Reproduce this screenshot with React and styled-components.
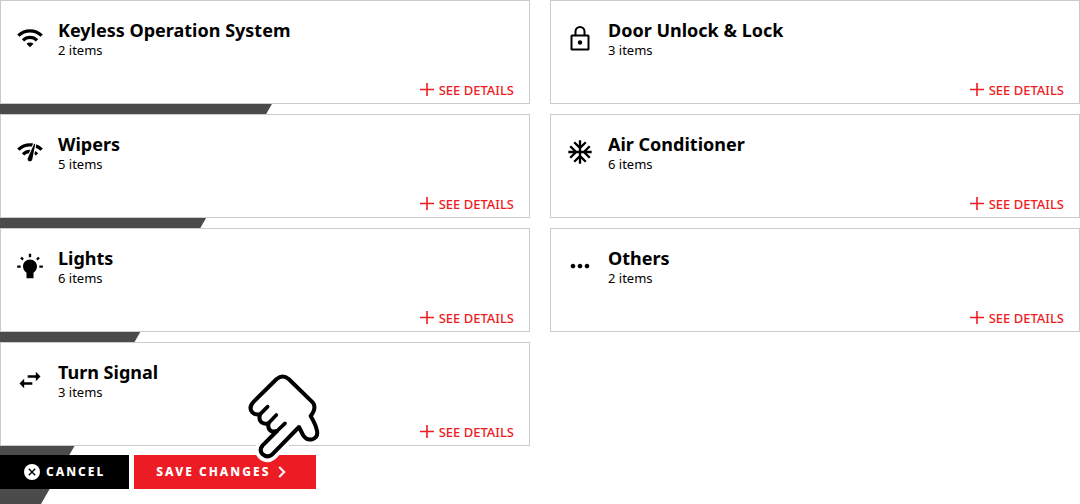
import React from "react"
import styled, { createGlobalStyle, css } from "styled-components"
import {
  MdAcUnit,
  MdMoreHoriz,
  MdNetworkCheck,
  MdSwapHoriz,
  MdWbIncandescent,
  MdWifi,
} from "react-icons/md"

const colors = {
  red: "#ed1c24",
  stripe: "#4b4b4b",
  line: "#cbcbcb",
}

const GlobalStyle = createGlobalStyle`
  * {
    box-sizing: border-box;
  }
  body {
    margin: 0;
    background: #fff;
    color: #000;
    font-family: "Noto Sans", "Open Sans", sans-serif;
  }
`

const Page = styled.main`
  min-height: 100vh;
  background: linear-gradient(120deg, ${colors.stripe} 287px, #fff 288px);
`

const Grid = styled.div`
  display: grid;
  grid-template-columns: 1fr 1fr;
  gap: 10px 20px;
`

const Card = styled.section`
  display: grid;
  grid-template-columns: 28px 1fr;
  column-gap: 14px;
  align-items: start;
  padding: 18px 15px 3px;
  border: 1px solid ${colors.line};
  background: #fff;
`

const IconBox = styled.span`
  display: flex;
  padding-top: 5px;
  font-size: 28px;
  ${({ $flip }) =>
    $flip &&
    css`
      & svg {
        transform: rotate(180deg);
      }
    `}
`

const Title = styled.h2`
  margin: 0;
  font-size: 18px;
  line-height: 22px;
  font-weight: 700;
`

const Count = styled.p`
  margin: 0;
  font-size: 13px;
  line-height: 18px;
`

const Details = styled.button`
  grid-column: 1 / -1;
  justify-self: end;
  display: flex;
  align-items: center;
  gap: 5px;
  margin-top: 21px;
  padding: 0;
  border: 0;
  background: none;
  color: ${colors.red};
  font: 500 13px/20px "Noto Sans", sans-serif;
  cursor: pointer;
`

const Actions = styled.div`
  display: flex;
  gap: 5px;
  margin-top: 9px;
`

const Button = styled.button`
  display: flex;
  align-items: center;
  justify-content: center;
  gap: ${({ $primary }) => ($primary ? "8px" : "6px")};
  height: 34px;
  padding: ${({ $primary }) => ($primary ? "0 30px 0 22px" : "0 24px")};
  border: 0;
  background: ${({ $primary }) => ($primary ? colors.red : "#000")};
  color: #fff;
  font: 800 12px/16px "Noto Sans", sans-serif;
  letter-spacing: 2px;
  cursor: pointer;
`

const SaveArea = styled.div`
  position: relative;
`

const Pointer = styled.svg`
  position: absolute;
  left: 106px;
  top: -87px;
  pointer-events: none;
`

const LockIcon = () => (
  <svg width="28" height="28" viewBox="0 0 28 28" aria-hidden="true">
    <g fill="none" stroke="currentColor" strokeWidth="2">
      <rect x="5.5" y="11.5" width="17" height="14" rx="0.6" />
      <path d="M9.5 11.5V7.5a4.5 4.5 0 0 1 9 0v4" />
    </g>
    <circle cx="14" cy="18.5" r="2.2" fill="currentColor" />
  </svg>
)

const PlusIcon = () => (
  <svg width="14" height="14" viewBox="0 0 14 14" aria-hidden="true">
    <path d="M7 0v13M0 6.5h14" stroke="currentColor" strokeWidth="1.6" />
  </svg>
)

const CloseIcon = () => (
  <svg width="16" height="16" viewBox="0 0 16 16" aria-hidden="true">
    <circle cx="8" cy="8" r="8" fill="#fff" />
    <path d="M4.8 4.8l6.4 6.4M11.2 4.8l-6.4 6.4" stroke="#000" strokeWidth="1.4" />
  </svg>
)

const ChevronIcon = () => (
  <svg width="8" height="12" viewBox="0 0 8 12" aria-hidden="true">
    <path d="M1.2 1l5 5-5 5" fill="none" stroke="#fff" strokeWidth="2" />
  </svg>
)

const handOutline =
  "M830 117L762 184Q744 202 757 217Q766 226 780 223Q775 241 786 248Q795 254 806 249Q802 266 812 272Q820 277 831 273L788 316Q776 330 788 343Q801 355 816 344L897 261L909 285Q919 302 937 298Q955 292 951 273Q948 255 932 228Q951 203 938 187L866 117Q848 102 830 117Z"

const HandPointer = () => (
  <Pointer width="85" height="100" viewBox="720 84 255 300" aria-hidden="true">
    <g strokeLinejoin="round" strokeLinecap="round">
      <path d={handOutline} fill="#fff" stroke="#fff" strokeWidth="34" />
      <path d={handOutline} fill="#fff" stroke="#000" strokeWidth="12" />
      <path
        d="M780 223L803 200M806 249L829 225M831 273L855 250"
        fill="none"
        stroke="#000"
        strokeWidth="11"
      />
    </g>
  </Pointer>
)

const groups = [
  { title: "Keyless Operation System", count: 2, icon: MdWifi },
  { title: "Door Unlock & Lock", count: 3, icon: LockIcon },
  { title: "Wipers", count: 5, icon: MdNetworkCheck },
  { title: "Air Conditioner", count: 6, icon: MdAcUnit },
  { title: "Lights", count: 6, icon: MdWbIncandescent, flip: true },
  { title: "Others", count: 2, icon: MdMoreHoriz },
  { title: "Turn Signal", count: 3, icon: MdSwapHoriz },
]

const SettingGroup = ({ title, count, icon: Icon, flip }) => (
  <Card>
    <IconBox $flip={flip}>
      <Icon aria-hidden="true" />
    </IconBox>
    <div>
      <Title>{title}</Title>
      <Count>{count} items</Count>
    </div>
    <Details type="button">
      <PlusIcon />
      SEE DETAILS
    </Details>
  </Card>
)

export default function App() {
  return (
    <Page>
      <GlobalStyle />
      <Grid>
        {groups.map(group => (
          <SettingGroup key={group.title} {...group} />
        ))}
      </Grid>
      <Actions>
        <Button type="button">
          <CloseIcon />
          CANCEL
        </Button>
        <SaveArea>
          <Button type="button" $primary>
            SAVE CHANGES
            <ChevronIcon />
          </Button>
          <HandPointer />
        </SaveArea>
      </Actions>
    </Page>
  )
}
